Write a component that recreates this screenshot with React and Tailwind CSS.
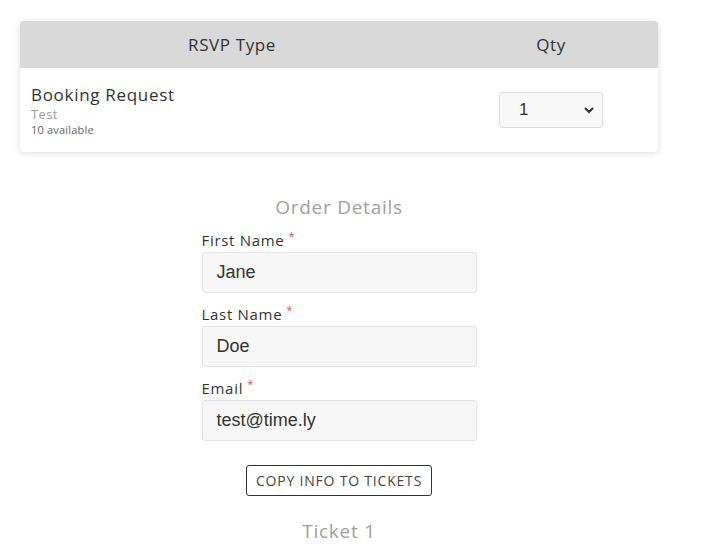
import React from "react";

const P = { fontFamily: '"Open Sans", "DejaVu Sans", sans-serif' };
const A = { fontFamily: '"Liberation Sans", Arial, sans-serif' };

function Field({ label, value }) {
  return (
    <div className="mt-[11px]">
      <div className="h-[20px] flex items-center text-[15px] leading-[20px] tracking-[0.7px] text-[#333]" style={P}>
        <span>{label}</span>
        <span className="ml-[4px] -mt-[10px] text-[11px] leading-none text-[#d9534f]">*</span>
      </div>
      <div
        className="mt-[2px] h-[41px] w-[275px] rounded-[3px] border border-[#e3e3e3] bg-[#f7f7f7] pl-[14px] flex items-center text-[18px] text-[#333]"
        style={A}
      >
        {value}
      </div>
    </div>
  );
}

export default function App() {
  return (
    <div className="min-h-[550px] w-[717px] bg-white pt-[21px] pl-[20px]">
      <div className="w-[638px] rounded-[4px] bg-white shadow-[0_1px_6px_rgba(0,0,0,0.14)] overflow-hidden">
        <div className="h-[47px] bg-[#d9d9d9] flex items-center text-[17px] font-medium tracking-[0.6px] text-[#333]" style={P}>
          <div className="w-[424px] text-center">RSVP Type</div>
          <div className="flex-1 text-center">Qty</div>
        </div>
        <div className="h-[84px] flex items-center">
          <div className="w-[424px] pl-[11px]" style={P}>
            <div className="text-[17px] leading-[22px] tracking-[0.7px] text-[#333]">Booking Request</div>
            <div className="text-[13px] leading-[17px] tracking-[0.4px] text-[#999]">Test</div>
            <div className="text-[11px] leading-[14px] tracking-[0.2px] text-[#666]">10 available</div>
          </div>
          <div className="flex-1 flex justify-center">
            <div
              className="h-[36px] w-[104px] rounded-[3px] border border-[#dcdcdc] bg-[#f8f8f8] flex items-center justify-between pl-[19px] pr-[8px] text-[17px] text-[#333]"
              style={A}
            >
              <span>1</span>
              <svg width="10" height="7" viewBox="0 0 10 7">
                <path d="M1.5 1.5 L5 5 L8.5 1.5" fill="none" stroke="#333" strokeWidth="2" strokeLinecap="round" />
              </svg>
            </div>
          </div>
        </div>
      </div>

      <div className="w-[638px] flex flex-col items-center">
        <div className="mt-[43px] h-[24px] text-[19px] leading-[24px] tracking-[0.75px] text-[#a0a0a0]" style={P}>
          Order Details
        </div>
        <div className="w-[275px]">
          <Field label="First Name" value="Jane" />
          <Field label="Last Name" value="Doe" />
          <Field label="Email" value="test@time.ly" />
        </div>
        <button
          className="mt-[24px] h-[31px] px-[9px] rounded-[3px] border border-[#333] bg-white text-[14px] tracking-[0.8px] text-[#444]"
          style={P}
        >
          COPY INFO TO TICKETS
        </button>
        <div className="mt-[23px] h-[24px] text-[19px] leading-[24px] tracking-[0.75px] text-[#a0a0a0]" style={P}>
          Ticket 1
        </div>
      </div>
    </div>
  );
}
